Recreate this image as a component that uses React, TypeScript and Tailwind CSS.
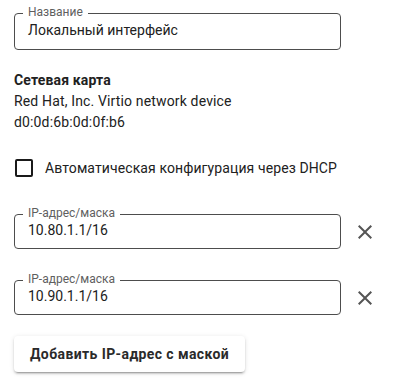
import React from "react";

function CloseIcon() {
  return (
    <svg viewBox="0 0 24 24" className="w-6 h-6 fill-[#555]">
      <path d="M19 6.41 17.59 5 12 10.59 6.41 5 5 6.41 10.59 12 5 17.59 6.41 19 12 13.41 17.59 19 19 17.59 13.41 12z" />
    </svg>
  );
}

function Outlined({ label, value, small }: { label: string; value: string; small?: boolean }) {
  return (
    <div
      className={
        small
          ? "relative w-[327px] h-[35px] border border-[#4d4d4d] rounded-[4px] pl-[13px] pt-[5px]"
          : "relative w-[327px] h-[37px] border border-[#4d4d4d] rounded-[4px] pl-[13px] pt-[6px]"
      }
    >
      <span className="absolute -top-[10px] left-[8px] px-[5px] bg-white text-[12px] leading-4 text-[#5f5f5f]">
        {label}
      </span>
      <div className="text-[14px] leading-5 text-[#212121]">{value}</div>
    </div>
  );
}

export default function App() {
  return (
    <div className="w-[399px] h-[389px] bg-white pl-[14px] pt-[13px] font-['Roboto',sans-serif] text-[#212121]">
      <Outlined label="Название" value="Локальный интерфейс" />

      <div className="mt-[20px] text-[14px] leading-[21px] tracking-[0.15px]">
        <div className="font-bold">Сетевая карта</div>
        <div>Red Hat, Inc. Virtio network device</div>
        <div>d0:0d:6b:0d:0f:b6</div>
      </div>

      <div className="mt-[23px] flex items-center h-6">
        <div className="ml-[1px] w-[18px] h-[18px] border-2 border-[#1a1a1a] rounded-[2px]" />
        <span className="ml-[12px] text-[14px] leading-6 tracking-[0.1px]">
          Автоматическая конфигурация через DHCP
        </span>
      </div>

      <div className="mt-[34px] flex items-center">
        <Outlined label="IP-адрес/маска" value="10.80.1.1/16" small />
        <div className="ml-[12px]">
          <CloseIcon />
        </div>
      </div>

      <div className="mt-[31px] flex items-center">
        <Outlined label="IP-адрес/маска" value="10.90.1.1/16" small />
        <div className="ml-[12px]">
          <CloseIcon />
        </div>
      </div>

      <button className="mt-[21px] h-9 px-4 bg-white rounded-[4px] text-[14px] font-bold tracking-[0.4px] text-[#2a2a2a] shadow-[0px_3px_1px_-2px_rgba(0,0,0,0.2),0px_2px_2px_0px_rgba(0,0,0,0.14),0px_1px_5px_0px_rgba(0,0,0,0.12)]">
        Добавить IP-адрес с маской
      </button>
    </div>
  );
}
